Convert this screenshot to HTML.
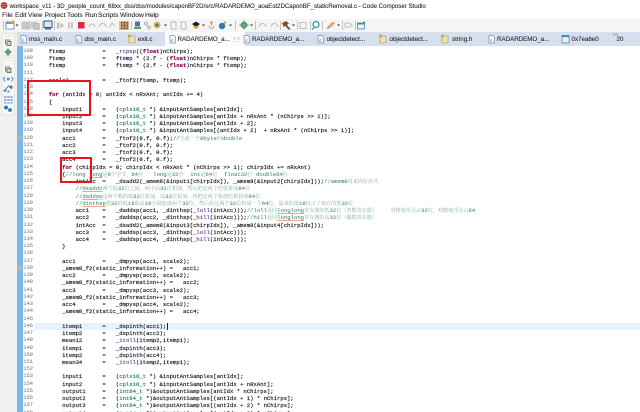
<!DOCTYPE html>
<html>
<head>
<meta charset="utf-8">
<style>
html,body{margin:0;padding:0;background:#fff}
#w{position:relative;width:640px;height:412px;overflow:hidden;background:#fff;filter:blur(.33px);font-family:"Liberation Sans","Noto Sans CJK SC",sans-serif;color:#222}
.a{position:absolute;white-space:pre}
.m{font-size:6.7px;top:11.5px;line-height:8px;color:#222;-webkit-text-stroke:.08px #222}
.t{font-size:6.2px;top:36px;line-height:8px;color:#222;-webkit-text-stroke:.08px #222}
pre{position:absolute;margin:0;font-family:"Liberation Mono","Noto Serif CJK SC",monospace;font-size:5.6px;line-height:7.24px}
#code{left:35.3px;top:47.9px;color:#111;-webkit-text-stroke:.14px #111}
#code *{line-height:0}
#nums{left:23.4px;top:47.9px;color:#808080;font-size:5.35px;-webkit-text-stroke:.08px #808080}
b{color:#7f0055;-webkit-text-stroke:.14px #7f0055}
i{font-style:normal;color:#0f7452;-webkit-text-stroke:.12px #0f7452}
u{text-decoration:none;color:#6a2a96;-webkit-text-stroke:.12px #6a2a96}
s{text-decoration:none;color:#4d9277;-webkit-text-stroke:.1px #4d9277}
em{font-style:normal;font-size:5.1px;color:#80ad98;-webkit-text-stroke:0}
q{quotes:none;text-decoration:underline;text-decoration-color:#eba28f;text-decoration-thickness:.5px;text-underline-offset:1px}
q:before,q:after{content:none}
svg{position:absolute;left:0;top:0}
</style>
</head>
<body>
<div id="w">
<div class="a" style="left:0;top:19px;width:640px;height:13px;background:#f5f5f5"></div>
<div class="a" style="left:0;top:32px;width:17px;height:380px;background:#f1f1ef"></div>
<div class="a" style="left:17px;top:32px;width:623px;height:14px;background:#d6dfee"></div>
<div class="a" style="left:165px;top:32px;width:80px;height:14px;background:#fbfcfe"></div>
<div class="a" style="left:17px;top:46px;width:6px;height:366px;background:#7db6e8"></div>
<div class="a" style="left:35px;top:322.6px;width:605px;height:7.3px;background:#e8f2fe"></div>

<div class="a" style="left:9.6px;top:1.5px;font-size:6.1px;line-height:9px;color:#222;-webkit-text-stroke:.08px #222">workspace_v11 - 3D_people_count_68xx_dss/dss/modules/caponBF2D/src/RADARDEMO_aoaEst2DCaponBF_staticRemoval.c - Code Composer Studio</div>
<div class="a m" style="left:2px">File</div>
<div class="a m" style="left:15px">Edit</div>
<div class="a m" style="left:28px">View</div>
<div class="a m" style="left:44.5px">Project</div>
<div class="a m" style="left:67px">Tools</div>
<div class="a m" style="left:85px">Run</div>
<div class="a m" style="left:98px">Scripts</div>
<div class="a m" style="left:120px">Window</div>
<div class="a m" style="left:145px">Help</div>

<div class="a t" style="left:29px">mss_main.c</div>
<div class="a t" style="left:84.5px">dss_main.c</div>
<div class="a t" style="left:138px">exit.c</div>
<div class="a t" style="left:177.5px">RADARDEMO_a...</div>
<div class="a t" style="left:252px">RADARDEMO_a...</div>
<div class="a t" style="left:326.5px">objectdetect...</div>
<div class="a t" style="left:389.5px">objectdetect...</div>
<div class="a t" style="left:452px">string.h</div>
<div class="a t" style="left:497px">RADARDEMO_a...</div>
<div class="a t" style="left:571.5px">0x7ea6e0</div>
<div class="a t" style="left:616.5px">20</div>
<div class="a" style="left:613px;top:32px;font-size:4.5px;line-height:6px;color:#555">&gt;&gt;</div>

<svg width="640" height="412" viewBox="0 0 640 412">
  <!-- title logo -->
  <circle cx="4" cy="5.5" r="3.4" fill="#c8282c"/>
  <path d="M1.500 4.500h5M1.500 6.500h5" stroke="#f0b0b0" stroke-width=".5"/>
  <!-- toolbar separators -->
  <g fill="#c4c4c4">
    <rect x="3" y="21" width="1" height="9"/><rect x="29" y="21" width="1" height="9"/><rect x="42" y="21" width="1" height="9"/><rect x="54" y="21" width="1" height="9"/><rect x="119" y="21" width="1" height="9"/><rect x="131" y="21" width="1" height="9"/><rect x="235" y="21" width="1" height="9"/><rect x="255" y="21" width="1" height="9"/><rect x="280" y="21" width="1" height="9"/><rect x="297" y="21" width="1" height="9"/><rect x="310" y="21" width="1" height="9"/><rect x="322" y="21" width="1" height="9"/><rect x="342" y="21" width="1" height="9"/><rect x="355" y="21" width="1" height="9"/>
  </g>
  <!-- new -->
  <rect x="6" y="22" width="8" height="7" fill="#fff" stroke="#5c86ad" stroke-width=".8"/>
  <rect x="6" y="22" width="8" height="2" fill="#6f9cc4"/>
  <circle cx="13" cy="22" r="1.6" fill="#e2a93a"/>
  <path d="M15.500 24.500h3l-1.500 1.800z" fill="#333"/>
  <!-- save, save all -->
  <rect x="22" y="22" width="6.500" height="7" fill="#c8c8c8" stroke="#aaa" stroke-width=".5"/>
  <rect x="31" y="22" width="6" height="6" fill="#cfcfcf" stroke="#aaa" stroke-width=".5"/>
  <rect x="33.500" y="23.500" width="6" height="6" fill="#c4c4c4" stroke="#aaa" stroke-width=".5"/>
  <!-- debug monitor -->
  <rect x="44" y="21" width="8" height="6.500" fill="#dfe9f4" stroke="#22578f" stroke-width="1"/>
  <rect x="45" y="28" width="6" height="1.500" fill="#3b6fa5"/>
  <!-- resume / suspend / stop -->
  <rect x="57" y="22.500" width="2" height="6" fill="#bbb"/>
  <path d="M60 22.500l4.500 3-4.500 3z" fill="#c9c9c9"/>
  <rect x="68" y="22.500" width="2" height="6" fill="#c6c6c6"/><rect x="71" y="22.500" width="2" height="6" fill="#c6c6c6"/>
  <rect x="78" y="22" width="6.500" height="6.500" fill="#dc2c3c"/>
  <!-- step icons -->
  <g fill="none" stroke="#bdbdbd" stroke-width="1">
    <path d="M89 27a3 3 0 0 1 6 0"/><path d="M99 27a3.500 3.500 0 0 1 7 0"/><path d="M109 28l3-5 3 3"/>
    <path d="M259 27a3.500 3.500 0 0 1 7 0"/><path d="M271 27a3.500 3.500 0 0 1 7 0"/>
    <path d="M345 23h5l2 2-2 2h-5z"/>
    <rect x="300" y="22.500" width="6" height="6"/>
    <path d="M171 22h5v7h-5z"/><path d="M181 22h5v7h-5z"/>
    <path d="M145 23l5 5"/><circle cx="146" cy="23.500" r="1.600"/><circle cx="149" cy="27.500" r="1.600"/>
  </g>
  <!-- grid -->
  <rect x="120.500" y="21.500" width="8" height="8" fill="#8a5a1e"/>
  <path d="M123 21.500v8M126 21.500v8M120.500 24h8M120.500 27h8" stroke="#ead9b8" stroke-width=".6"/>
  <!-- target icons -->
  <rect x="135" y="21.500" width="5" height="5" fill="#3c7ba8"/><rect x="134" y="27" width="7" height="2" fill="#5aa050"/>
  <circle cx="157" cy="25" r="3.500" fill="#e6b84a"/><circle cx="157" cy="25" r="1.600" fill="#3a78b8"/>
  <path d="M164 24.500h3l-1.500 1.800z" fill="#333"/>
  <path d="M192 24l4-2.500 4 2.500-4 3z" fill="#222"/><path d="M193 27l3 2 3-2-1-1h-4z" fill="#d8a520"/>
  <path d="M202 24.500h3l-1.500 1.800z" fill="#333"/>
  <path d="M211.500 22v4M209 26c0 3 5 3 5 0" fill="none" stroke="#a9a9a0" stroke-width="1"/>
  <circle cx="211.500" cy="22.500" r="1.200" fill="#d08a3a"/>
  <circle cx="222" cy="26" r="3.200" fill="#2f78b8"/><circle cx="225" cy="22.500" r="1.200" fill="#d8a030"/>
  <path d="M229 24.500h3l-1.500 1.800z" fill="#333"/>
  <circle cx="244" cy="25" r="3.400" fill="#4c9a6a"/><circle cx="244" cy="25" r="1.300" fill="#e8f0e8"/>
  <path d="M244 20.500v9M239.500 25h9" stroke="#4c9a6a" stroke-width="1"/>
  <path d="M250 24.500h3l-1.500 1.800z" fill="#333"/>
  <!-- hammer -->
  <path d="M282 23l4-2 3 2.500-2 1.500 3.500 4-1.500 1-3.700-4-1.500 1z" fill="#7b5332"/>
  <path d="M292 24.500h3l-1.500 1.800z" fill="#333"/>
  <circle cx="316" cy="24.500" r="3" fill="none" stroke="#2a8fa8" stroke-width="1.200"/>
  <path d="M314 27.500l-1.800 2" stroke="#2a8fa8" stroke-width="1.200"/>
  <path d="M326 29l2-3 5-4.500 2 2-5 4.500z" fill="#e0a860"/><path d="M327 29l1.500-2.500 1.500 1.500z" fill="#8a9ec0"/>
  <path d="M337 24.500h3l-1.500 1.800z" fill="#333"/>
  <rect x="357.500" y="23" width="7" height="6" fill="#eaf2fa" stroke="#4a85b8" stroke-width=".8"/>
  <rect x="357.500" y="23" width="7" height="1.500" fill="#4a85b8"/>
  <path d="M361 24l3.500-3 .8 2z" fill="#3ea03e"/>

  <!-- tab icons -->
  <g fill="#f4f7fb" stroke="#6d8fb4" stroke-width=".7">
    <path d="M21 35.500h4l1.500 1.500v6h-5.500z"/><path d="M76 35.500h4l1.500 1.500v6h-5.500z"/>
    <path d="M170 35.500h4l1.500 1.500v6h-5.500z"/><path d="M244 35.500h4l1.500 1.500v6h-5.500z"/>
    <path d="M318 35.500h4l1.500 1.500v6h-5.500z"/><path d="M489 35.500h4l1.500 1.500v6h-5.500z"/>
  </g>
  <g fill="#3a6ea5" font-size="4" font-family="Liberation Sans" font-weight="bold">
    <text x="22.300" y="41.500">c</text><text x="77.300" y="41.500">c</text><text x="171.300" y="41.500">c</text><text x="245.300" y="41.500">c</text><text x="319.300" y="41.500">c</text><text x="490.300" y="41.500">c</text>
  </g>
  <g fill="#eee3b5" stroke="#9a8f5a" stroke-width=".6">
    <path d="M129 36h6v7h-6z"/><path d="M380 36h6v7h-6z"/><path d="M442 36h6v7h-6z"/>
  </g>
  <g fill="#d9a93a"><circle cx="129.500" cy="36" r="1.600"/><circle cx="380.500" cy="36" r="1.600"/><circle cx="442.500" cy="36" r="1.600"/></g>
  <rect x="562" y="35.500" width="7" height="7.500" fill="#e6f0f8" stroke="#4a85b0" stroke-width=".8"/>
  <rect x="562" y="35.500" width="7" height="1.600" fill="#4a85b0"/>
  <path d="M233 37h3v3h-3zM237 37h3v3h-3zM233 41h3v1h-3zM237 41h3v1h-3z" fill="#dfe2e6"/>

  <!-- left panels -->
  <rect x="2" y="33.500" width="12.500" height="22" fill="#f7f7f4" stroke="#e0e0da" stroke-width=".7"/>
  <rect x="2" y="58" width="12.500" height="57" fill="#f7f7f4" stroke="#e0e0da" stroke-width=".7"/>
  <path d="M5 36h7M5 60.500h7" stroke="#c4c4bc" stroke-width=".8" stroke-dasharray=".8 .8"/>
  <rect x="5.500" y="40" width="4" height="4" fill="#fff" stroke="#666" stroke-width=".8"/>
  <rect x="7" y="41.500" width="4" height="4" fill="#d8d8d8" stroke="#666" stroke-width=".8"/>
  <circle cx="8" cy="52" r="2.600" fill="#4d9a72"/><circle cx="8" cy="52" r="1" fill="#e8d89a"/>
  <path d="M8 48v8M4 52h8" stroke="#4d9a72" stroke-width=".9"/>
  <rect x="5.500" y="67" width="4" height="4" fill="#fff" stroke="#666" stroke-width=".8"/>
  <rect x="7" y="68.500" width="4" height="4" fill="#ccc" stroke="#666" stroke-width=".8"/>
  <path d="M5 76.500l-1.500 2.500 1.500 2.500M11.500 76.500l1.500 2.500-1.500 2.500" fill="none" stroke="#3a78b8" stroke-width=".8"/>
  <circle cx="8.200" cy="79" r="1.500" fill="#5a94c8"/>
  <path d="M4.500 91l4-5 3.500 3" fill="none" stroke="#4a7fb0" stroke-width="1"/>
  <circle cx="5" cy="90.500" r="1.500" fill="#5a94c8"/><circle cx="11" cy="87" r="1.500" fill="#3a78b8"/><circle cx="8.500" cy="91.500" r="1.200" fill="#6aa0d0"/>
  <g fill="#8fb2d4"><rect x="4" y="96" width="2.400" height="2"/><rect x="7.200" y="96" width="2.400" height="2"/><rect x="10.400" y="96" width="2.400" height="2"/><rect x="4" y="99" width="2.400" height="2"/><rect x="7.200" y="99" width="2.400" height="2"/><rect x="10.400" y="99" width="2.400" height="2"/><rect x="4" y="102" width="2.400" height="1.600"/><rect x="7.200" y="102" width="2.400" height="1.600"/><rect x="10.400" y="102" width="2.400" height="1.600"/></g>
  <circle cx="6" cy="107.500" r="2" fill="#2f78b8"/><circle cx="10" cy="110" r="2" fill="#3a8ac8"/>

  <!-- annotation markers -->
  <circle cx="19.500" cy="138" r="2.400" fill="#b8bcc0"/><circle cx="19.500" cy="268" r="2.400" fill="#b8bcc0"/>
  <path d="M17 138h5M19.500 135.500v5M17 268h5M19.500 265.500v5" stroke="#a8a8a8" stroke-width=".6"/>
</svg>

<pre id="nums">108
109
110
111
112
113
114
115
116
117
118
119
120
121
122
123
124
125
126
127
128
129
130
131
132
133
134
135
136
137
138
139
140
141
142
143
144
145
146
147
148
149
150
151
152
153
154
155
156
157
158</pre>

<pre id="code">    ftemp           =   <u>_rcpsp</u>((<b>float</b>)nChirps);
    ftemp           =   ftemp * (2.f - (<b>float</b>)nChirps * ftemp);
    ftemp           =   ftemp * (2.f - (<b>float</b>)nChirps * ftemp);

    scale2          =   _ftof2(ftemp, ftemp);

    <b>for</b> (antIdx = 0; antIdx &lt; nRxAnt; antIdx += 4)
    {
        input1      =   (<i>cplx16_t</i> *) &amp;inputAntSamples[antIdx];
        input2      =   (<i>cplx16_t</i> *) &amp;inputAntSamples[antIdx + nRxAnt * (nChirps &gt;&gt; 1)];
        input3      =   (<i>cplx16_t</i> *) &amp;inputAntSamples[antIdx + 2];
        input4      =   (<i>cplx16_t</i> *) &amp;inputAntSamples[(antIdx + 2)  + nRxAnt * (nChirps &gt;&gt; 1)];
        acc1        =   _ftof2(0.f, 0.f);<s>//<em>生成一个</em>8byte<em>的</em>double</s>
        acc2        =   _ftof2(0.f, 0.f);
        acc3        =   _ftof2(0.f, 0.f);
        acc4        =   _ftof2(0.f, 0.f);
        <b>for</b> (chirpIdx = 0; chirpIdx &lt; nRxAnt * (nChirps &gt;&gt; 1); chirpIdx += nRxAnt)
        {<s>//long <q>long</q><em>是</em>8<em>个字节，</em>64<em>位</em>   long<em>是</em>32<em>位</em>  int<em>是</em>64<em>位</em>  float32<em>位</em> double64<em>位</em></s>
            intAcc  =   _dsadd2(_amem8(&amp;input1[chirpIdx]), _amem8(&amp;input2[chirpIdx]));<s>//amem8<em>用来内存对齐。</em></s>
            <s>//<q>dsadd2</q><em>两个低</em>32<em>位之间，两个高</em>32<em>位相加，然后把这两个结果拼成</em>64<em>位</em></s>
            <s>//<q>daddsp</q><em>这两个数的低</em>32<em>位相加，高</em>32<em>位相加，再把这两个相加结果拼成</em>64<em>位</em></s>
            <s>//<q>dinthsp</q><em>把</em>32<em>的低</em>16<em>和高</em>16<em>分别变成两个</em>32<em>位，然后用这两个</em>32<em>位组成一个</em>64<em>位，原来的低</em>16<em>位占了现在的低</em>32<em>位</em></s>
            acc1    =   _daddsp(acc1, _dinthsp(<u>_loll</u>(intAcc)));<s>//loll<em>返回</em><q>longlong</q><em>寄存器的低</em>32<em>位（奇数寄存器）</em>    <em>单精度浮点占</em>32<em>位，双精度浮点占</em>64</s>
            acc2    =   _daddsp(acc2, _dinthsp(<u>_hill</u>(intAcc)));<s>//hill<em>返回</em><q>longlong</q><em>寄存器的高</em>32<em>位（偶数寄存器）</em></s>
            intAcc  =   _dsadd2(_amem8(&amp;input3[chirpIdx]), _amem8(&amp;input4[chirpIdx]));
            acc3    =   _daddsp(acc3, _dinthsp(<u>_loll</u>(intAcc)));
            acc4    =   _daddsp(acc4, _dinthsp(<u>_hill</u>(intAcc)));
        }

        acc1        =   _dmpysp(acc1, scale2);
        _amem8_f2(static_information++) =   acc1;
        acc2        =   _dmpysp(acc2, scale2);
        _amem8_f2(static_information++) =   acc2;
        acc3        =   _dmpysp(acc3, scale2);
        _amem8_f2(static_information++) =   acc3;
        acc4        =   _dmpysp(acc4, scale2);
        _amem8_f2(static_information++) =   acc4;

        itemp1      =   _dspinth(acc1);
        itemp2      =   _dspinth(acc2);
        mean12      =   <u>_itoll</u>(itemp2,itemp1);
        itemp1      =   _dspinth(acc3);
        itemp2      =   _dspinth(acc4);
        mean34      =   <u>_itoll</u>(itemp2,itemp1);

        input1      =   (<i>cplx16_t</i> *) &amp;inputAntSamples[antIdx];
        input2      =   (<i>cplx16_t</i> *) &amp;inputAntSamples[antIdx + nRxAnt];
        output1     =   (<i>int64_t</i> *)&amp;outputAntSamples[antIdx * nChirps];
        output2     =   (<i>int64_t</i> *)&amp;outputAntSamples[(antIdx + 1) * nChirps];
        output3     =   (<i>int64_t</i> *)&amp;outputAntSamples[(antIdx + 2) * nChirps];
        output4     =   (<i>int64_t</i> *)&amp;outputAntSamples[(antIdx + 3) * nChirps];</pre>

<div class="a" style="left:166.500px;top:323px;width:.8px;height:6.500px;background:#222"></div>
<!-- red annotation boxes -->
<div class="a" style="left:26.500px;top:80px;width:60.500px;height:31.500px;border:2px solid #e8141c"></div>
<div class="a" style="left:60px;top:157px;width:27.500px;height:21.500px;border:2px solid #e8141c"></div>
</div>
</body>
</html>
